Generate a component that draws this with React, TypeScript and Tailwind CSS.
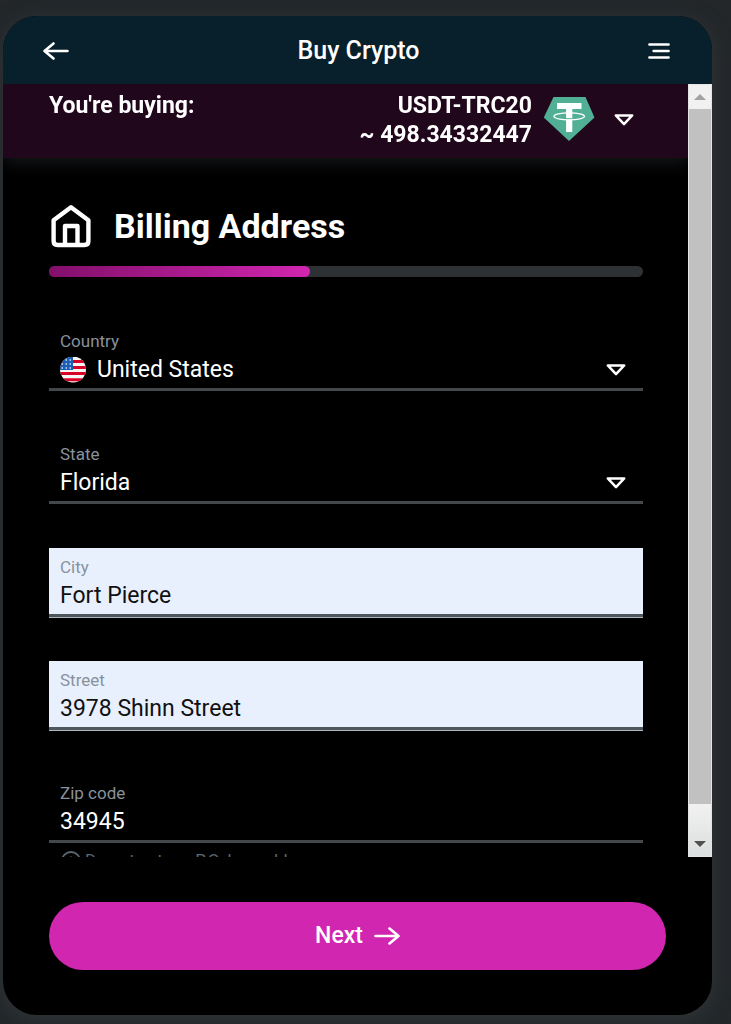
import { useState } from "react";
import type { ReactNode } from "react";

const COUNTRIES = ["United States", "Canada", "United Kingdom"];
const STATES = ["Florida", "Georgia", "New York", "Texas"];
const PROGRESS = 44;

function ArrowIcon({ className = "" }: { className?: string }) {
  return (
    <svg
      viewBox="0 0 26 18"
      className={`h-[18px] w-[26px] ${className}`}
      fill="none"
      stroke="currentColor"
      strokeWidth="2.6"
      strokeLinecap="round"
      strokeLinejoin="round"
      aria-hidden="true"
    >
      <path d="M1.5 9H24M15.5 1.5L24.5 9l-9 7.5" />
    </svg>
  );
}

function CaretIcon() {
  return (
    <svg
      viewBox="0 0 20 12"
      className="pointer-events-none h-3 w-5 shrink-0"
      fill="none"
      stroke="currentColor"
      strokeWidth="2.5"
      strokeLinejoin="round"
      aria-hidden="true"
    >
      <path d="M1.8 1.4h16.4L10 10.2z" />
    </svg>
  );
}

function MenuIcon() {
  return (
    <svg
      viewBox="0 0 22 16"
      className="h-4 w-[22px]"
      fill="none"
      stroke="currentColor"
      strokeWidth="2.5"
      strokeLinecap="round"
      aria-hidden="true"
    >
      <path d="M1.4 1.4h19.2M5.6 8h15M1.4 14.6h19.2" />
    </svg>
  );
}

function HouseIcon() {
  return (
    <svg
      viewBox="0 0 40 44"
      className="h-11 w-10"
      fill="none"
      stroke="currentColor"
      strokeWidth="4.4"
      strokeLinejoin="round"
      aria-hidden="true"
    >
      <path d="M2.6 16.2L20 3.2l17.4 13V37q0 4-4 4H6.6q-4 0-4-4z" />
      <path d="M14 41V22h12.5v19" />
    </svg>
  );
}

function TetherIcon() {
  return (
    <svg viewBox="0 0 52 46" className="h-[46px] w-[52px]" aria-hidden="true">
      <path d="M10.5 0h32L51.5 20.5 26 44 .8 20.5z" fill="#50AF95" />
      <path d="M14 6h24.5v6H29.3v23h-6.2V12H14z" fill="#fff" />
      <ellipse cx="26.2" cy="19.3" rx="15.3" ry="3.5" fill="none" stroke="#fff" strokeWidth="1.3" />
      <path d="M23 21.6h6.4" stroke="#50AF95" strokeWidth="0.9" />
    </svg>
  );
}

function FlagIcon() {
  return (
    <svg viewBox="0 0 26 26" className="size-[26px] shrink-0" aria-hidden="true">
      <clipPath id="flag-circle">
        <circle cx="13" cy="12.5" r="13" />
      </clipPath>
      <g clipPath="url(#flag-circle)">
        <path fill="#f5f5f5" d="M0 0h26v26H0z" />
        <path
          stroke="#d80027"
          strokeWidth="3"
          d="M0 4.5h26M0 10.5h26M0 16.5h26M0 22.8h26"
        />
        <path fill="#1a5fb4" d="M0 0h13v13H0z" />
        <path
          stroke="#fff"
          strokeOpacity="0.8"
          strokeWidth="1.4"
          strokeDasharray="1.5 2.5"
          d="M5.5 3h8M1.5 7h12M1.5 11h12"
        />
      </g>
    </svg>
  );
}

function InfoIcon() {
  return (
    <svg
      viewBox="0 0 20 20"
      className="size-5 shrink-0"
      fill="none"
      stroke="currentColor"
      strokeWidth="1.8"
      aria-hidden="true"
    >
      <circle cx="10" cy="10" r="9" />
      <path d="M10 5.5v2M10 9v6" />
    </svg>
  );
}

interface FieldProps {
  id: string;
  label: string;
  filled?: boolean;
  children: ReactNode;
}

function Field({ id, label, filled, children }: FieldProps) {
  return (
    <div
      className={`flex flex-col border-b-3 px-[11px] pt-[7px] pb-px ${
        filled
          ? "border-[#50575c] bg-[#e8f0fe] text-[#111] shadow-[0_1px_0_#aeb6c0]"
          : "border-[#44484b] text-white"
      }`}
    >
      <label htmlFor={id} className="text-[17px] leading-6 text-[#88929c]">
        {label}
      </label>
      <div className="flex h-[34px] items-center gap-[11px] text-[23px]">{children}</div>
    </div>
  );
}

interface SelectProps {
  id: string;
  value: string;
  options: string[];
  onChange: (value: string) => void;
}

function Select({ id, value, options, onChange }: SelectProps) {
  return (
    <div className="flex min-w-0 flex-1 items-center pr-1.5">
      <select
        id={id}
        value={value}
        onChange={(e) => onChange(e.target.value)}
        className="-mr-5 min-w-0 flex-1 appearance-none bg-transparent pr-5 outline-none"
      >
        {options.map((o) => (
          <option key={o} className="bg-black">
            {o}
          </option>
        ))}
      </select>
      <CaretIcon />
    </div>
  );
}

function ScrollTrack() {
  return (
    <div className="flex w-6 shrink-0 flex-col border border-[#e4e4e4] bg-[#f1f1f1]" aria-hidden="true">
      <div className="flex h-6 items-center justify-center">
        <svg viewBox="0 0 12 6" className="h-[6px] w-3">
          <path d="M0 6l6-6 6 6z" fill="#a3a3a3" />
        </svg>
      </div>
      <div className="flex-1 bg-[#c1c1c1]" />
      <div className="flex h-[52px] items-end justify-center bg-linear-to-b from-[#f1f1f1] to-[#dcdfdf] pb-[9px]">
        <svg viewBox="0 0 12 6" className="h-[6px] w-3">
          <path d="M0 0l6 6 6-6z" fill="#505050" />
        </svg>
      </div>
    </div>
  );
}

export default function App() {
  const [country, setCountry] = useState("United States");
  const [state, setState] = useState("Florida");
  const [city, setCity] = useState("Fort Pierce");
  const [street, setStreet] = useState("3978 Shinn Street");
  const [zip, setZip] = useState("34945");

  return (
    <div className="h-screen bg-[#23272a] pt-4 pr-[19px] pb-[9px] pl-[3px] font-[Roboto,sans-serif] text-white">
      <main className="flex h-full flex-col overflow-hidden rounded-[34px] bg-black shadow-[0_4px_20px_#303639]">
        <header className="flex h-[68px] shrink-0 items-center justify-between bg-[#08202b] pt-0.5 pr-[42px] pl-10">
          <button type="button" aria-label="Back">
            <ArrowIcon className="rotate-180" />
          </button>
          <h1 className="text-[25px] font-medium">Buy Crypto</h1>
          <button type="button" aria-label="Menu">
            <MenuIcon />
          </button>
        </header>

        <div className="flex min-h-0 flex-1">
          <div className="min-w-0 flex-1 overflow-y-auto [scrollbar-width:none]">
            <section className="sticky top-0 flex h-[74px] items-start justify-between bg-[#21071b] pt-[7px] pr-[54px] pl-[46px] text-[23px] leading-[29px] font-bold shadow-[0_4px_16px_#16191b]">
              <p>You're buying:</p>
              <div className="flex items-center">
                <p className="text-right">
                  USDT-TRC20
                  <br />~ 498.34332447
                </p>
                <span className="ml-[11px]">
                  <TetherIcon />
                </span>
                <button type="button" aria-label="Show order details" className="ml-[19px]">
                  <CaretIcon />
                </button>
              </div>
            </section>

            <form className="pt-[46px] pr-[45px] pl-[46px]">
              <div className="flex items-center gap-[23px] pl-0.5">
                <HouseIcon />
                <h2 className="text-[34px] leading-11 font-bold">Billing Address</h2>
              </div>
              <div
                role="progressbar"
                aria-label="Progress"
                aria-valuenow={PROGRESS}
                className="mt-[18px] h-[11px] rounded-full bg-[#2d3134]"
              >
                <div
                  className="h-full rounded-full bg-linear-to-r from-[#830f6b] to-[#d126b0]"
                  style={{ width: `${PROGRESS}%` }}
                />
              </div>

              <div className="mt-[45px] flex flex-col gap-11">
                <Field id="country" label="Country">
                  <FlagIcon />
                  <Select id="country" value={country} options={COUNTRIES} onChange={setCountry} />
                </Field>
                <Field id="state" label="State">
                  <Select id="state" value={state} options={STATES} onChange={setState} />
                </Field>
                <Field id="city" label="City" filled>
                  <input
                    id="city"
                    value={city}
                    onChange={(e) => setCity(e.target.value)}
                    className="w-full bg-transparent outline-none"
                  />
                </Field>
                <Field id="street" label="Street" filled>
                  <input
                    id="street"
                    value={street}
                    onChange={(e) => setStreet(e.target.value)}
                    className="w-full bg-transparent outline-none"
                  />
                </Field>
                <Field id="zip" label="Zip code">
                  <input
                    id="zip"
                    value={zip}
                    onChange={(e) => setZip(e.target.value)}
                    className="w-full bg-transparent outline-none"
                  />
                </Field>
              </div>
              <p className="mt-[5px] flex items-center gap-1 pl-3 text-[17px] text-[#5c6770]">
                <InfoIcon />
                Do not enter a P.O. box address
              </p>
            </form>
          </div>
          <ScrollTrack />
        </div>

        <footer className="shrink-0 px-[46px] pt-[45px] pb-[45px]">
          <button
            type="button"
            className="flex h-[68px] w-full items-center justify-center gap-[11px] rounded-full bg-[#d126b0] text-[23px] font-medium"
          >
            Next
            <ArrowIcon />
          </button>
        </footer>
      </main>
    </div>
  );
}
